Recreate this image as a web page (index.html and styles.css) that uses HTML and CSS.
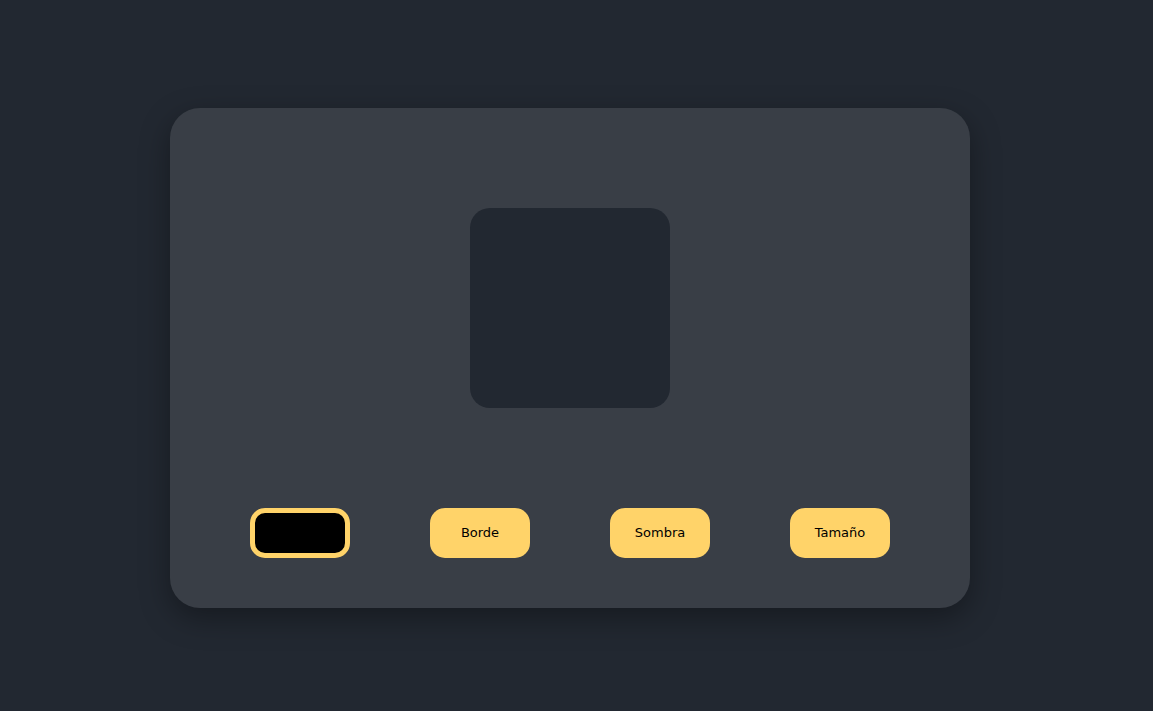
FILE: index.html
```html
<!DOCTYPE html>
<html lang="es">
<head>
<meta charset="utf-8">
<title>Caja</title>
<link rel="stylesheet" href="styles.css">
</head>
<body>
<main class="stage">
  <section class="card">
    <div class="box"></div>
    <div class="controls">
      <button class="btn btn-active" type="button"></button>
      <button class="btn" type="button">Borde</button>
      <button class="btn" type="button">Sombra</button>
      <button class="btn" type="button">Tamaño</button>
    </div>
  </section>
</main>
</body>
</html>
```
FILE: styles.css
```css
html, body {
  margin: 0;
  padding: 0;
  height: 100%;
}
body {
  background: #222831;
  font-family: "DejaVu Sans", Verdana, sans-serif;
}
.stage {
  height: 100%;
  display: flex;
  align-items: flex-start;
  justify-content: flex-start;
  padding: 108px 0 0 170px;
  box-sizing: border-box;
}
.card {
  width: 800px;
  height: 500px;
  box-sizing: border-box;
  background: #393e46;
  border-radius: 30px;
  box-shadow: 0 10px 30px rgba(0, 0, 0, 0.35);
  display: flex;
  flex-direction: column;
  align-items: center;
  padding-top: 100px;
  gap: 100px;
}
.box {
  width: 200px;
  height: 200px;
  background: #222831;
  border-radius: 20px;
}
.controls {
  display: flex;
  gap: 80px;
}
.btn {
  width: 100px;
  height: 50px;
  border: none;
  border-radius: 15px;
  background: #ffd369;
  color: #000;
  font-family: "DejaVu Sans", Verdana, sans-serif;
  font-size: 13px;
  padding: 0 0 2px 0;
  cursor: pointer;
}
.btn-active {
  background: #000;
  border: 5px solid #ffd369;
}
```
